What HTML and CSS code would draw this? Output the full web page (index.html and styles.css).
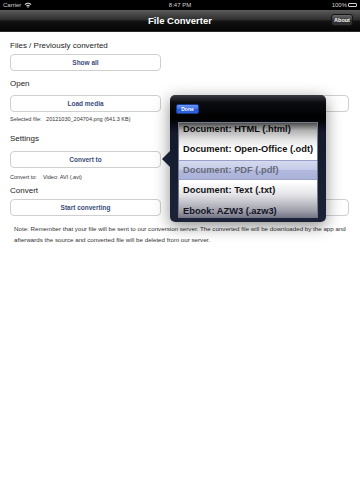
FILE: index.html
```html
<!DOCTYPE html>
<html lang="en">
<head>
    <meta charset="UTF-8">
    <meta name="viewport" content="width=device-width, initial-scale=1.0">
    <title>File Converter</title>
    <link rel="stylesheet" href="styles.css">
</head>
<body>
    <div class="screen">
        <div class="status-bar">
            <div class="status-left">
                <span>Carrier</span>
                <svg class="wifi" width="8" height="6" viewBox="0 0 8 6">
                    <path d="M0.5 2.2 A5 5 0 0 1 7.5 2.2 L6.6 3.1 A3.7 3.7 0 0 0 1.4 3.1 Z" fill="#d8d8d8"/>
                    <path d="M2 3.7 A3 3 0 0 1 6 3.7 L5.1 4.6 A1.7 1.7 0 0 0 2.9 4.6 Z" fill="#d8d8d8"/>
                    <path d="M3.3 5.3 L4 4.7 L4.7 5.3 L4 6 Z" fill="#d8d8d8"/>
                </svg>
            </div>
            <div class="status-time">8:47 PM</div>
            <div class="status-right">
                <span>100%</span>
                <span class="battery"><span class="battery-fill"></span></span>
            </div>
        </div>

        <div class="nav-bar">
            <h1>File Converter</h1>
            <button class="nav-button" type="button">About</button>
        </div>

        <div class="content">
            <div class="label first">Files / Previously converted</div>
            <div class="row">
                <button class="btn" type="button">Show all</button>
            </div>

            <div class="label">Open</div>
            <div class="row">
                <button class="btn" type="button">Load media</button>
                <button class="btn" type="button">&nbsp;</button>
            </div>
            <div class="info">Selected file:&nbsp;&nbsp; 20121030_204704.png (641.3 KB)</div>

            <div class="label settings">Settings</div>
            <div class="row">
                <button class="btn" type="button">Convert to</button>
            </div>
            <div class="info spaced">Convert to:&nbsp;&nbsp;&nbsp; Video: AVI (.avi)</div>

            <div class="label tight">Convert</div>
            <div class="row">
                <button class="btn" type="button">Start converting</button>
                <button class="btn" type="button">&nbsp;</button>
            </div>

            <p class="note">Note: Remember that your file will be sent to our conversion server. The converted file will be downloaded by the app and afterwards the source and converted file will be deleted from our server.</p>
        </div>

        <div class="popover">
            <div class="popover-arrow"></div>
            <div class="popover-header">
                <button class="done-button" type="button">Done</button>
            </div>
            <div class="picker">
                <div class="picker-row">Document: HTML (.html)</div>
                <div class="picker-row">Document: Open-Office (.odt)</div>
                <div class="picker-row selected">Document: PDF (.pdf)</div>
                <div class="picker-row">Document: Text (.txt)</div>
                <div class="picker-row">Ebook: AZW3 (.azw3)</div>
            </div>
        </div>
    </div>
</body>
</html>
```

FILE: styles.css
```css
body {
    margin: 0;
    padding: 0;
    font-family: "Liberation Sans", Arial, sans-serif;
    background-color: #fff;
}
.screen {
    position: relative;
    width: 360px;
    height: 480px;
    overflow: hidden;
    background: #fff;
}
.status-bar {
    height: 10px;
    background: #000;
    color: #d0d0d0;
    font-size: 6px;
    display: flex;
    align-items: center;
    justify-content: space-between;
    padding: 0 3px;
}
.status-left, .status-right {
    display: flex;
    align-items: center;
    gap: 3px;
    width: 60px;
}
.status-right {
    justify-content: flex-end;
    gap: 1px;
}
.battery {
    width: 9px;
    height: 4px;
    border: 1px solid #d0d0d0;
    border-radius: 1px;
    padding: 1px;
    box-sizing: border-box;
    display: flex;
}
.battery-fill {
    flex: 1;
    background: #d0d0d0;
}
.nav-bar {
    height: 21px;
    background: linear-gradient(to bottom, #5c5c5c 0%, #2f2f2f 45%, #111 55%, #050505 100%);
    border-bottom: 1px solid #2a2a2a;
    display: flex;
    align-items: center;
    justify-content: center;
    position: relative;
}
.nav-bar h1 {
    margin: 0;
    color: #fff;
    font-size: 9.5px;
    font-weight: bold;
}
.nav-button {
    position: absolute;
    right: 7px;
    top: 4px;
    width: 22px;
    height: 12px;
    padding: 0;
    font-family: inherit;
    font-size: 5.5px;
    font-weight: bold;
    color: #fff;
    background: linear-gradient(to bottom, #6a6a6a, #3a3a3a 50%, #2a2a2a 51%, #333);
    border: 1px solid #151515;
    border-radius: 3px;
}
.content {
    display: flex;
    flex-direction: column;
    padding: 8px 10px 0 10px;
}
.label {
    font-size: 8px;
    line-height: 10px;
    color: #222;
    margin: 8px 0 6px;
}
.label.first {
    margin-top: 1px;
    margin-bottom: 3px;
}
.label.settings {
    margin-top: 10.5px;
    margin-bottom: 7.5px;
}
.label.tight {
    margin-top: 5px;
    margin-bottom: 3px;
}
.row {
    display: grid;
    grid-template-columns: 151px 151px;
    column-gap: 37px;
}
.btn {
    height: 17px;
    padding: 0;
    font-family: inherit;
    font-size: 6.5px;
    font-weight: bold;
    color: #3a4d7c;
    background: #fff;
    border: 1px solid #cfcfcf;
    border-radius: 4px;
}
.info {
    font-size: 5.5px;
    line-height: 8px;
    color: #333;
    margin-top: 3px;
}
.info.spaced {
    margin-top: 5px;
}
.note {
    margin: 6.5px 0 0 4px;
    font-size: 6.2px;
    line-height: 11px;
    color: #333;
}
.popover {
    position: absolute;
    left: 170px;
    top: 95px;
    width: 156px;
    height: 127px;
    box-sizing: border-box;
    padding: 0 8px 4px 8px;
    border-radius: 5px;
    background: linear-gradient(to bottom, #3a3c44 0%, #0b0c10 6%, #000 18%, #151a2c 30%, #1c2338 100%);
    box-shadow: 0 4px 16px rgba(0, 0, 0, 0.45);
    display: flex;
    flex-direction: column;
}
.popover-arrow {
    position: absolute;
    left: -8px;
    top: 56px;
    width: 0;
    height: 0;
    border-top: 8px solid transparent;
    border-bottom: 8px solid transparent;
    border-right: 8px solid #1a2136;
}
.popover-header {
    height: 27px;
    display: flex;
    align-items: center;
}
.done-button {
    width: 23px;
    height: 10px;
    padding: 0;
    margin-left: -2px;
    font-family: inherit;
    font-size: 5px;
    font-weight: bold;
    color: #fff;
    background: linear-gradient(to bottom, #6a96f4, #3b6fe6 50%, #2658d8 51%, #2d63e0);
    border: 1px solid #1a3a90;
    border-radius: 2px;
}
.picker {
    position: relative;
    flex: 1;
    overflow: hidden;
    background: #fff;
    border: 1px solid #767b8a;
    border-bottom: none;
}
.picker::after {
    content: "";
    position: absolute;
    left: 0;
    right: 0;
    top: 0;
    bottom: 0;
    background: linear-gradient(to bottom, rgba(0, 0, 0, 0.7) 0%, rgba(0, 0, 0, 0.3) 8%, rgba(0, 0, 0, 0.1) 18%, rgba(0, 0, 0, 0) 28%, rgba(0, 0, 0, 0) 62%, rgba(40, 40, 70, 0.12) 75%, rgba(20, 20, 50, 0.4) 92%, rgba(20, 20, 50, 0.6) 100%);
}
.picker-row {
    height: 20.4px;
    line-height: 20.4px;
    padding-left: 4px;
    font-size: 9.3px;
    font-weight: bold;
    color: #111;
    white-space: nowrap;
}
.picker-row:first-child {
    margin-top: -4px;
}
.picker-row.selected {
    color: #666a78;
    background: linear-gradient(to bottom, #d6daf0 0%, #c4cae8 50%, #b2b9de 51%, #aab2da 100%);
    border-top: 1px solid #9aa2cc;
    border-bottom: 1px solid #9aa2cc;
    height: 18.4px;
    line-height: 18.4px;
}
```
